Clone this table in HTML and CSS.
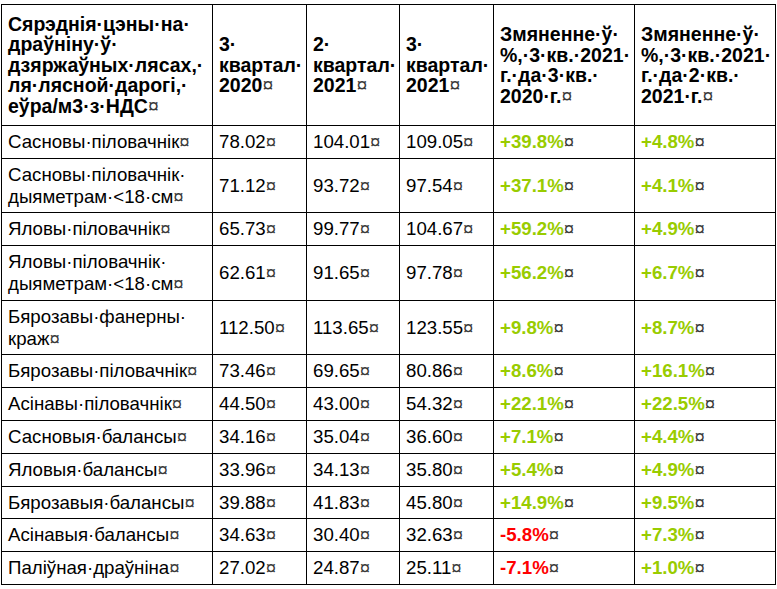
FILE: index.html
```html
<!DOCTYPE html>
<html lang="be">
<head>
<meta charset="utf-8">
<title>Сярэднія цэны</title>
<link rel="stylesheet" href="styles.css">
</head>
<body>
<table class="prices">
  <colgroup>
    <col class="c1"><col class="c2"><col class="c3"><col class="c4"><col class="c5"><col class="c6">
  </colgroup>
  <thead>
    <tr>
      <th>Сярэднія·цэны·на·<br>драўніну·ў·<br>дзяржаўных·лясах,·<br>ля·лясной·дарогі,·<br>еўра/м3·з·НДС<span class="m">¤</span></th>
      <th>3·<br>квартал·<br>2020<span class="m">¤</span></th>
      <th>2·<br>квартал·<br>2021<span class="m">¤</span></th>
      <th>3·<br>квартал·<br>2021<span class="m">¤</span></th>
      <th>Змяненне·ў·<br>%,·3·кв.·2021·<br>г.·да·3·кв.·<br>2020·г.<span class="m">¤</span></th>
      <th>Змяненне·ў·<br>%,·3·кв.·2021·<br>г.·да·2·кв.·<br>2021·г.<span class="m">¤</span></th>
    </tr>
  </thead>
  <tbody>
    <tr><td>Сасновы·піловачнік<span class="m">¤</span></td><td>78.02<span class="m">¤</span></td><td>104.01<span class="m">¤</span></td><td>109.05<span class="m">¤</span></td><td><b class="up">+39.8%</b><span class="m">¤</span></td><td><b class="up">+4.8%</b><span class="m">¤</span></td></tr>
    <tr><td>Сасновы·піловачнік·<br>дыяметрам·&lt;18·см<span class="m">¤</span></td><td>71.12<span class="m">¤</span></td><td>93.72<span class="m">¤</span></td><td>97.54<span class="m">¤</span></td><td><b class="up">+37.1%</b><span class="m">¤</span></td><td><b class="up">+4.1%</b><span class="m">¤</span></td></tr>
    <tr><td>Яловы·піловачнік<span class="m">¤</span></td><td>65.73<span class="m">¤</span></td><td>99.77<span class="m">¤</span></td><td>104.67<span class="m">¤</span></td><td><b class="up">+59.2%</b><span class="m">¤</span></td><td><b class="up">+4.9%</b><span class="m">¤</span></td></tr>
    <tr><td>Яловы·піловачнік·<br>дыяметрам·&lt;18·см<span class="m">¤</span></td><td>62.61<span class="m">¤</span></td><td>91.65<span class="m">¤</span></td><td>97.78<span class="m">¤</span></td><td><b class="up">+56.2%</b><span class="m">¤</span></td><td><b class="up">+6.7%</b><span class="m">¤</span></td></tr>
    <tr><td>Бярозавы·фанерны·<br>краж<span class="m">¤</span></td><td>112.50<span class="m">¤</span></td><td>113.65<span class="m">¤</span></td><td>123.55<span class="m">¤</span></td><td><b class="up">+9.8%</b><span class="m">¤</span></td><td><b class="up">+8.7%</b><span class="m">¤</span></td></tr>
    <tr><td>Бярозавы·піловачнік<span class="m">¤</span></td><td>73.46<span class="m">¤</span></td><td>69.65<span class="m">¤</span></td><td>80.86<span class="m">¤</span></td><td><b class="up">+8.6%</b><span class="m">¤</span></td><td><b class="up">+16.1%</b><span class="m">¤</span></td></tr>
    <tr><td>Асінавы·піловачнік<span class="m">¤</span></td><td>44.50<span class="m">¤</span></td><td>43.00<span class="m">¤</span></td><td>54.32<span class="m">¤</span></td><td><b class="up">+22.1%</b><span class="m">¤</span></td><td><b class="up">+22.5%</b><span class="m">¤</span></td></tr>
    <tr><td>Сасновыя·балансы<span class="m">¤</span></td><td>34.16<span class="m">¤</span></td><td>35.04<span class="m">¤</span></td><td>36.60<span class="m">¤</span></td><td><b class="up">+7.1%</b><span class="m">¤</span></td><td><b class="up">+4.4%</b><span class="m">¤</span></td></tr>
    <tr><td>Яловыя·балансы<span class="m">¤</span></td><td>33.96<span class="m">¤</span></td><td>34.13<span class="m">¤</span></td><td>35.80<span class="m">¤</span></td><td><b class="up">+5.4%</b><span class="m">¤</span></td><td><b class="up">+4.9%</b><span class="m">¤</span></td></tr>
    <tr><td>Бярозавыя·балансы<span class="m">¤</span></td><td>39.88<span class="m">¤</span></td><td>41.83<span class="m">¤</span></td><td>45.80<span class="m">¤</span></td><td><b class="up">+14.9%</b><span class="m">¤</span></td><td><b class="up">+9.5%</b><span class="m">¤</span></td></tr>
    <tr><td>Асінавыя·балансы<span class="m">¤</span></td><td>34.63<span class="m">¤</span></td><td>30.40<span class="m">¤</span></td><td>32.63<span class="m">¤</span></td><td><b class="down">-5.8%</b><span class="m">¤</span></td><td><b class="up">+7.3%</b><span class="m">¤</span></td></tr>
    <tr><td>Паліўная·драўніна<span class="m">¤</span></td><td>27.02<span class="m">¤</span></td><td>24.87<span class="m">¤</span></td><td>25.11<span class="m">¤</span></td><td><b class="down">-7.1%</b><span class="m">¤</span></td><td><b class="up">+1.0%</b><span class="m">¤</span></td></tr>
  </tbody>
</table>
</body>
</html>
```
FILE: styles.css
```css
html, body {
  margin: 0;
  padding: 0;
  background: #ffffff;
}

body {
  padding: 4px 0 0 1px;
  font-family: "Liberation Sans", Arial, sans-serif;
  color: #000000;
}

.prices {
  border-collapse: collapse;
  table-layout: fixed;
  width: 774px;
}

.c1 { width: 211px; }
.c2 { width: 94px; }
.c3 { width: 93px; }
.c4 { width: 94px; }
.c5 { width: 141px; }
.c6 { width: 141px; }

.prices th,
.prices td {
  border: 1px solid #000000;
  text-align: left;
  vertical-align: middle;
  padding: 0 4px 0 6px;
  white-space: nowrap;
  overflow: hidden;
}

.prices th {
  font-size: 19.5px;
  font-weight: bold;
  line-height: 20.5px;
  height: 120px;
  padding-top: 0;
  padding-bottom: 0;
}

.prices td {
  font-size: 18.67px;
  line-height: 21.8px;
  padding-top: 5px;
  padding-bottom: 5px;
}

.prices .m {
  font-weight: normal;
  color: #3a3a3a;
}

.up {
  color: #99cc00;
}

.down {
  color: #ff0000;
}
```
